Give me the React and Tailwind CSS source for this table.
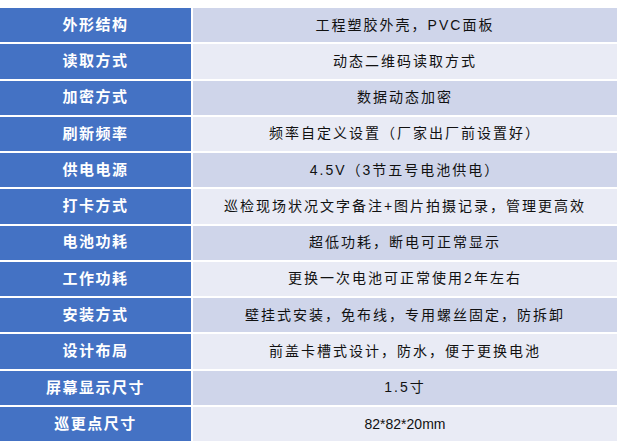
import React from 'react';

const rows = [
  ['外形结构', '工程塑胶外壳，PVC面板'],
  ['读取方式', '动态二维码读取方式'],
  ['加密方式', '数据动态加密'],
  ['刷新频率', '频率自定义设置（厂家出厂前设置好）'],
  ['供电电源', '4.5V（3节五号电池供电）'],
  ['打卡方式', '巡检现场状况文字备注+图片拍摄记录，管理更高效'],
  ['电池功耗', '超低功耗，断电可正常显示'],
  ['工作功耗', '更换一次电池可正常使用2年左右'],
  ['安装方式', '壁挂式安装，免布线，专用螺丝固定，防拆卸'],
  ['设计布局', '前盖卡槽式设计，防水，便于更换电池'],
  ['屏幕显示尺寸', '1.5寸'],
  ['巡更点尺寸', '82*82*20mm'],
];

const App = () => {
  return (
    <div className="w-[617px] h-[443px] overflow-hidden bg-white pt-[8px] font-['Liberation_Sans','Noto_Sans_CJK_SC',sans-serif]">
      <div className="flex flex-col gap-[2px]">
        {rows.map(([label, value], i) => (
          <div key={label} className="grid grid-cols-[191px_1fr] gap-[2px] h-[34.27px]">
            <div className="bg-[#4472c4] flex items-center justify-center text-white font-bold text-[15px] tracking-[1.5px]">
              {label}
            </div>
            <div
              className={`${i % 2 === 0 ? 'bg-[#cfd5ea]' : 'bg-[#e9ebf5]'} flex items-center justify-center text-[#111] text-[14px] ${i === 11 ? 'tracking-normal' : 'tracking-[2px]'}`}
            >
              {value}
            </div>
          </div>
        ))}
      </div>
    </div>
  );
};

export default App;
